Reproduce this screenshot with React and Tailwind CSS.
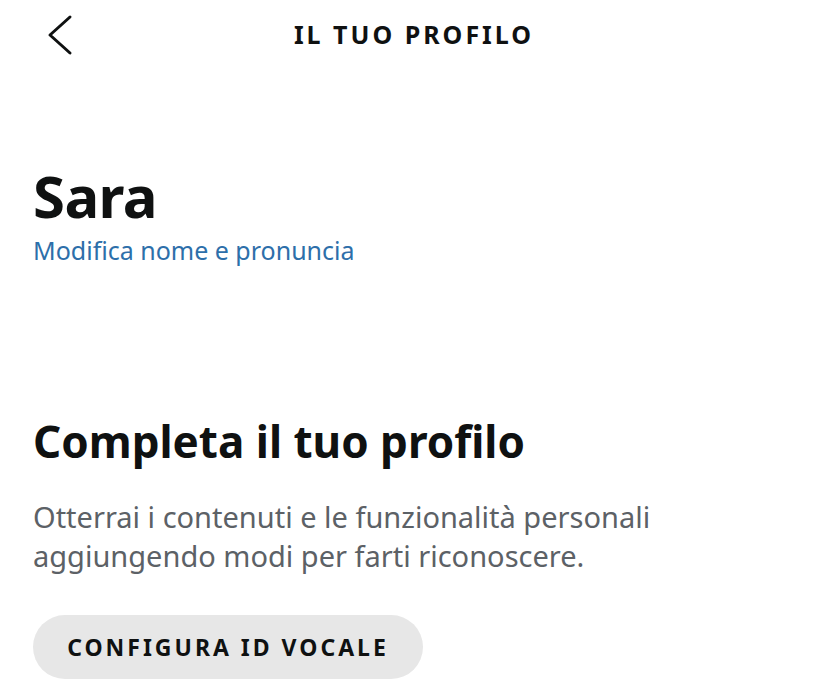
import React from 'react';

const font = { fontFamily: '"Noto Sans", "Open Sans", sans-serif' };

export default function App() {
  return (
    <div className="min-h-[687px] w-[828px] bg-white text-[#0f1111]" style={font}>
      <header className="grid h-[70px] grid-cols-[1fr_auto_1fr] items-center">
        <div className="pl-[44px]">
          <svg width="32" height="42" viewBox="0 0 32 42" fill="none">
            <path d="M26 3 L6 21 L26 39" stroke="#0f1111" strokeWidth="3" strokeLinecap="round" strokeLinejoin="round" />
          </svg>
        </div>
        <h1 className="text-[25px] font-bold tracking-[0.12em] text-[#0f1111]">IL TUO PROFILO</h1>
        <div />
      </header>

      <main className="px-[33px]">
        <section className="mt-[93px]">
          <h2 className="text-[58px] font-bold leading-[66px] tracking-[-0.01em]">Sara</h2>
          <a className="mt-[3px] block text-[25px] leading-[36px] text-[#2d6faa]">Modifica nome e pronuncia</a>
        </section>

        <section className="mt-[145px]">
          <h2 className="text-[44px] font-bold leading-[56px]">Completa il tuo profilo</h2>
          <p className="mt-[28px] text-[29px] leading-[39px] text-[#5c6166]">
            Otterrai i contenuti e le funzionalità personali
            <br />
            aggiungendo modi per farti riconoscere.
          </p>
          <button className="mt-[40px] flex h-[64px] w-[390px] items-center justify-center rounded-full bg-[#e7e7e7] text-[23px] font-bold tracking-[0.13em] text-[#0f1111]">
            CONFIGURA ID VOCALE
          </button>
        </section>
      </main>
    </div>
  );
}
